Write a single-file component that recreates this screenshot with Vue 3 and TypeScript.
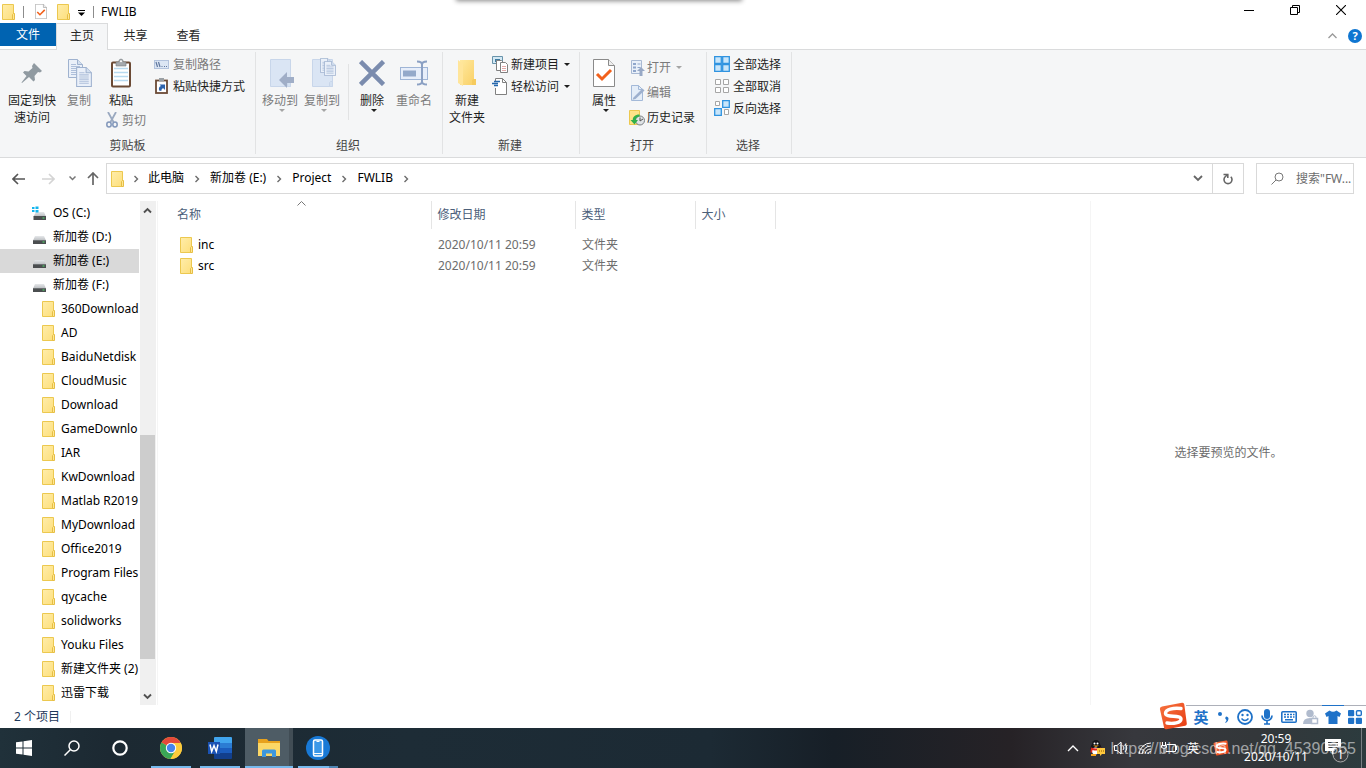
<script setup lang="ts">
interface Entry { name: string; icon: 'os' | 'drive' | 'folder'; selected?: boolean }
interface FileRow { name: string; modified: string; kind: string }

const tree: Entry[] = [
  { name: 'OS (C:)', icon: 'os' },
  { name: '新加卷 (D:)', icon: 'drive' },
  { name: '新加卷 (E:)', icon: 'drive', selected: true },
  { name: '新加卷 (F:)', icon: 'drive' },
  ...['360Download', 'AD', 'BaiduNetdisk', 'CloudMusic', 'Download', 'GameDownlo', 'IAR', 'KwDownload',
    'Matlab R2019', 'MyDownload', 'Office2019', 'Program Files', 'qycache', 'solidworks', 'Youku Files',
    '新建文件夹 (2)', '迅雷下载'].map((name): Entry => ({ name, icon: 'folder' })),
]
const crumbs: string[] = ['此电脑', '新加卷 (E:)', 'Project', 'FWLIB']
const files: FileRow[] = [
  { name: 'inc', modified: '2020/10/11 20:59', kind: '文件夹' },
  { name: 'src', modified: '2020/10/11 20:59', kind: '文件夹' },
]
</script>

<template>
  <div class="desktop">
    <svg class="defs" aria-hidden="true">
      <defs>
        <linearGradient id="gFolder" x1="0" y1="0" x2="1" y2="1"><stop offset="0" stop-color="#ffedaa" /><stop offset="1" stop-color="#fddf7c" /></linearGradient>
        <linearGradient id="gDrive" x1="0" y1="0" x2="0" y2="1"><stop offset="0" stop-color="#e6e8ea" /><stop offset="1" stop-color="#b9bcc0" /></linearGradient>
        <linearGradient id="gBig" x1="0" y1="0" x2="1" y2="1"><stop offset="0" stop-color="#ffe9a0" /><stop offset="1" stop-color="#f9cf63" /></linearGradient>
        <linearGradient id="gSogou" x1="0" y1="0" x2="1" y2="1"><stop offset="0" stop-color="#f7743f" /><stop offset="1" stop-color="#e63b12" /></linearGradient>
      </defs>
      <symbol id="folder" viewBox="0 0 14 16">
        <path d="M.5.500h11v15H.5z" fill="url(#gFolder)" stroke="#ecc84f" />
        <path d="M10.500 15.500v-5l1-1h1v6z" fill="#ffe793" stroke="#e6be45" />
      </symbol>
      <symbol id="drive" viewBox="0 0 15 14">
        <path d="M3 6h9l2 4.500H1z" fill="url(#gDrive)" />
        <path d="M1 10h13v4H1z" fill="#4b4e50" /><path d="M1 10h13v1H1z" fill="#6c7072" />
        <path d="M10.500 11.500h2v1h-2z" fill="#4fe36a" />
      </symbol>
      <symbol id="os" viewBox="0 0 15 14">
        <path d="M4 6h8l2 4.500H1.500z" fill="url(#gDrive)" />
        <path d="M1.500 10H14v4H1.500z" fill="#4b4e50" /><path d="M10.500 11.500h2v1h-2z" fill="#4fe36a" />
        <path d="M0 1h2.500v2H0zM3.500.5h3V3h-3zM0 4h2.500v2H0zM3.500 4h3v2.500h-3z" fill="#12b5ee" />
      </symbol>
      <symbol id="check" viewBox="0 0 22 28">
        <path d="M.5.5h15l6 6v21H.5z" fill="#fff" stroke="#8a8a8a" /><path d="M15.500.5v6h6" fill="#eee" stroke="#8a8a8a" />
        <path d="M4 15l5 5 9-9" fill="none" stroke="#f2611c" stroke-width="3" />
      </symbol>
      <symbol id="page" viewBox="0 0 15 19">
        <path d="M.5.5h9l5 5v13H.5z" fill="#eaf0f9" stroke="#9fb2cf" /><path d="M9.500.5v5h5" fill="#d4e0f0" stroke="#9fb2cf" />
        <path d="M3 5.500h5M3 7.500h9M3 9.500h9M3 11.500h9M3 13.500h9M3 15.500h9" stroke="#aebfda" fill="none" />
      </symbol>
      <symbol id="caret" viewBox="0 0 6 3"><path d="M0 0h6L3 3z" fill="currentColor" /></symbol>
      <symbol id="chev" viewBox="0 0 6 8"><path d="M1.500 1L4.500 4l-3 3" fill="none" stroke="#6b6b6b" stroke-width="1.400" /></symbol>
      <symbol id="sogou" viewBox="0 0 28 28">
        <path d="M3 4.500L23 .8q2-.3 2.300 1.600l2.500 19q.2 2-1.600 2.300L7.500 27.300q-2 .3-2.400-1.600L.9 7q-.4-2 2.100-2.500z" fill="url(#gSogou)" />
        <path d="M22 6.500C14 5.500 6.500 7.500 6.500 11.200c0 5 15.500 1 15.500 5.800 0 4-8 5-14 4" fill="none" stroke="#fff" stroke-width="3.400" stroke-linecap="round" />
      </symbol>
    </svg>

    <div class="notch"></div>

    <header class="titlebar">
      <svg class="i-folder" aria-hidden="true"><use href="#folder" /></svg>
      <span class="bar"></span>
      <button class="qa" aria-label="属性"><svg width="12" height="15"><use href="#check" /></svg></button>
      <button class="qa" aria-label="新建文件夹"><svg class="i-folder"><use href="#folder" /></svg></button>
      <button class="qa more" aria-label="自定义快速访问工具栏"><svg width="7" height="6" viewBox="0 0 7 6"><path d="M0 .5h7" stroke="#000" /><path d="M0 2.500h7L3.500 6z" /></svg></button>
      <span class="bar last"></span>
      <h1>FWLIB</h1>
      <div class="winbtns">
        <button aria-label="最小化"><svg width="10" height="10" viewBox="0 0 10 10"><path d="M0 5.500h10" stroke="#000" /></svg></button>
        <button aria-label="还原"><svg width="10" height="10" viewBox="0 0 10 10" fill="none" stroke="#000"><path d="M.5 2.500h7v7h-7zM2.500 2.500v-2h7v7h-2" /></svg></button>
        <button aria-label="关闭"><svg width="10" height="10" viewBox="0 0 10 10"><path d="M0 0l10 10M10 0L0 10" stroke="#000" stroke-width="1.100" /></svg></button>
      </div>
    </header>

    <nav class="tabs" aria-label="功能区">
      <button class="file">文件</button><button class="active">主页</button><button>共享</button><button>查看</button>
      <span class="fill"></span>
      <button class="fold" aria-label="折叠功能区"><svg width="9" height="6" viewBox="0 0 9 6"><path d="M.5 5l4-4 4 4" fill="none" stroke="#999" stroke-width="1.300" /></svg></button>
      <button class="help" aria-label="帮助">?</button>
    </nav>

    <section class="ribbon">
      <div class="group clip">
        <div class="body">
          <button class="big pin"><span class="ico"><svg width="22" height="22" viewBox="0 0 22 22"><path d="M13 1l8 8-2 1.500-2-.5-3.500 4 .5 4-1.500 1.500-4.500-4.500L1 21l-.5-.5L5.500 14 2 10.500 3.500 9l4 .5 4-3.500-.5-2z" fill="#909aa1" /></svg></span><span>固定到快</span><span>速访问</span></button>
          <button class="big copy off"><span class="ico"><svg width="24" height="28" viewBox="0 0 24 28"><use href="#page" width="15" height="19" /><use href="#page" x="8" y="8" width="16" height="20" /></svg></span><span>复制</span></button>
          <div class="stack">
            <button class="big paste"><span class="ico"><svg width="22" height="30" viewBox="0 0 22 30"><rect x="2" y="4.500" width="18" height="24" rx="1" fill="#fff" stroke="#6b4a35" stroke-width="2" /><path d="M4 10.500h14M4 14.500h14M4 18.500h14M4 22.500h14" stroke="#b8daf0" stroke-width="1.500" /><path d="M6 4h2.500Q9 1 11 1t2.500 3H16v4H6z" fill="#a4a9ad" stroke="#777d82" stroke-width=".6" /><circle cx="11" cy="3.300" r="1" fill="#fff" /></svg></span><span>粘贴</span></button>
            <button class="small off cut"><svg width="12" height="16" viewBox="0 0 12 16" fill="none"><path d="M2 0l5.500 10M10 0L4.500 10" stroke="#9aa9c0" stroke-width="1.800" /><ellipse cx="3" cy="12.500" rx="2.200" ry="2.500" stroke="#8398bb" stroke-width="1.500" /><ellipse cx="9" cy="12.500" rx="2.200" ry="2.500" stroke="#8398bb" stroke-width="1.500" /></svg>剪切</button>
          </div>
          <div class="col">
            <button class="small off"><svg width="15" height="9" viewBox="0 0 15 9"><rect x=".5" y=".5" width="14" height="8" fill="#dce6f4" stroke="#b3c3dd" /><path d="M2 2l1.500 5M4.500 2L6 7" stroke="#61789f" stroke-width="1.200" /><path d="M7.500 6.500h1M10 6.500h1M12 6.500h1" stroke="#61789f" /></svg>复制路径</button>
            <button class="small"><svg width="15" height="16" viewBox="0 0 15 16"><rect x="2" y="2.500" width="11" height="12.500" fill="#fff" stroke="#6b4a35" stroke-width="1.800" /><path d="M5 0h5v3.500H5z" fill="#9aa0a5" /><path d="M5 12.500c-.5-3 .5-4 2-4.500L5.500 6.500H11V12L9.300 10.300C8 10.500 7.500 11.500 7.300 13z" fill="#2c63ad" /></svg>粘贴快捷方式</button>
          </div>
        </div>
        <div class="caption">剪贴板</div>
      </div>

      <div class="group org">
        <div class="body">
          <button class="big off"><span class="ico"><svg width="28" height="30" viewBox="0 0 28 30"><path d="M4.500 1.500h20v27h-20z" fill="#dae5f4" stroke="#c8d6ea" /><path d="M21.500 28.500v-4l1-1h2v5z" fill="#d3e0f1" stroke="#c8d6ea" /><path d="M13 22l8-8v5h7v6h-7v5z" fill="#a0aec7" /></svg></span><span>移动到</span><svg class="dd"><use href="#caret" /></svg></button>
          <button class="big off"><span class="ico"><svg width="28" height="30" viewBox="0 0 28 30"><path d="M4.500 1.500h20v27h-20z" fill="#dae5f4" stroke="#c8d6ea" /><path d="M21.500 28.500v-4l1-1h2v5z" fill="#d3e0f1" stroke="#c8d6ea" /><use href="#page" x="12" y="0" width="12" height="15" /><use href="#page" x="16" y="3" width="12" height="15" /></svg></span><span>复制到</span><svg class="dd"><use href="#caret" /></svg></button>
          <span class="vsep"></span>
          <button class="big del"><span class="ico"><svg width="26" height="26" viewBox="0 0 26 26"><path d="M1.500 1.500l23 23M24.500 1.500l-23 23" stroke="#7b8cae" stroke-width="4.500" /></svg></span><span>删除</span><svg class="dd"><use href="#caret" /></svg></button>
          <button class="big off ren"><span class="ico"><svg width="28" height="26" viewBox="0 0 28 26" fill="none"><rect x=".5" y="7.500" width="27" height="12" fill="#e7eefa" stroke="#9fb5d6" /><path d="M3 10.500h13v6H3z" fill="#94a9ca" /><path d="M17 1.500q5 0 5 3 0-3 5-3M22 4v18M17 24.500q5 0 5-3 0 3 5 3" stroke="#8ba0c3" stroke-width="2" /></svg></span><span>重命名</span></button>
        </div>
        <div class="caption">组织</div>
      </div>

      <div class="group new">
        <div class="body">
          <button class="big"><span class="ico"><svg width="20" height="28" viewBox="0 0 20 28"><path d="M3 1h14v20h2v5H3z" fill="url(#gBig)" /><path d="M1 1l5 4v22l-5-3z" fill="#ffe59a" /><path d="M15 26v-5l1.500-1H19v6z" fill="#f6cb5e" /></svg></span><span>新建</span><span>文件夹</span></button>
          <div class="col">
            <button class="small"><svg width="17" height="17" viewBox="0 0 17 17"><path d="M.5.500h10v7H.5z" fill="#d3e8f4" stroke="#6893aa" /><path d="M3 3h5v3H3z" fill="#3e7ba0" /><path d="M4.500 4.500h5l2 2v8h-7z" fill="#fff" stroke="#808080" /><path d="M8.500 6.500h5l2 2v8h-7z" fill="#fff" stroke="#808080" /><path d="M10 10.500h4M10 12.500h4M10 14.500h4" stroke="#e2a9a9" /></svg>新建项目<svg class="dd"><use href="#caret" /></svg></button>
            <button class="small"><svg width="17" height="17" viewBox="0 0 17 17"><path d="M3.500 3V.5h7l4 4v12h-11V10" fill="#fff" stroke="#808080" /><path d="M10.500.5v4h4" fill="none" stroke="#808080" /><path d="M2 3.500h6M0 5.500h6M2 7.500h4" stroke="#2567ac" stroke-width="1.300" /></svg>轻松访问<svg class="dd"><use href="#caret" /></svg></button>
          </div>
        </div>
        <div class="caption">新建</div>
      </div>

      <div class="group open">
        <div class="body">
          <button class="big"><span class="ico"><svg width="22" height="28"><use href="#check" /></svg></span><span>属性</span><svg class="dd"><use href="#caret" /></svg></button>
          <div class="col tall">
            <button class="small off"><svg width="16" height="16" viewBox="0 0 16 16"><path d="M2.500.5h10v13h-10z" fill="#e9f0f9" stroke="#a8b9d3" /><path d="M4 3h3v2H4zM4 6.500h3v2H4zM4 10h3v2H4z" fill="#8fa6cb" /><path d="M8.500 4h3M8.500 7.500h3" stroke="#8fa6cb" /><path d="M12 7l4 4h-2.500v5h-3v-5H8z" fill="#97a8c5" /></svg>打开<svg class="dd"><use href="#caret" /></svg></button>
            <button class="small off"><svg width="16" height="16" viewBox="0 0 16 16"><path d="M2.500.5h7l4 4v11h-11z" fill="#e4edf8" stroke="#a3b9d8" /><path d="M9.500.5v4h4" fill="none" stroke="#a3b9d8" /><path d="M4.500 12.500l9-9 2 2-9 8.500-3 .8z" fill="#9db0ce" /></svg>编辑</button>
            <button class="small"><svg width="16" height="16" viewBox="0 0 16 16"><path d="M.5.500h10v14H.5z" fill="#ffe388" stroke="#ecc84f" /><circle cx="11" cy="10.500" r="4.500" fill="#dfe3e6" stroke="#7b8084" /><path d="M11 7.500v3.500l3-2" fill="none" stroke="#555" /><path d="M10.500 4.500C6 4.500 3.500 7 3.800 10H1.500l4 4.500L9 10H6.800C6.800 8 8 7 10.500 6.500z" fill="#32b04a" /></svg>历史记录</button>
          </div>
        </div>
        <div class="caption">打开</div>
      </div>

      <div class="group sel">
        <div class="body">
          <div class="col">
            <button class="small"><svg width="16" height="16" viewBox="0 0 16 16" fill="#c8e5fa" stroke="#2f93e0" stroke-width="1.300"><path d="M.7.700h6.600v6.600H.7zM8.700.700h6.600v6.600H8.700zM.7 8.700h6.600v6.600H.7zM8.700 8.700h6.600v6.600H8.700z" /></svg>全部选择</button>
            <button class="small"><svg width="16" height="16" viewBox="0 0 16 16" fill="#fff" stroke="#a6a6a6"><path d="M1.500 1.500h5v5h-5zM9.500 1.500h5v5h-5zM1.500 9.500h5v5h-5zM9.500 9.500h5v5h-5z" /></svg>全部取消</button>
            <button class="small"><svg width="16" height="16" viewBox="0 0 16 16"><path d="M1.500 1.500h4v4h-4zM10.500 9.500h4v5h-4z" fill="#fff" stroke="#a6a6a6" /><path d="M8.700.700h6.600v6.600H8.700zM.7 8.700h6.600v6.600H.7z" fill="#c8e5fa" stroke="#2f93e0" stroke-width="1.300" /></svg>反向选择</button>
          </div>
        </div>
        <div class="caption">选择</div>
      </div>
    </section>

    <div class="address">
      <button class="nav back" aria-label="后退"><svg width="13" height="12" viewBox="0 0 13 12" fill="none" stroke="#555" stroke-width="1.600"><path d="M13 6H1M6 1L1 6l5 5" /></svg></button>
      <button class="nav fwd" aria-label="前进"><svg width="13" height="12" viewBox="0 0 13 12" fill="none" stroke="#d4d4d4" stroke-width="1.600"><path d="M0 6h12M7 1l5 5-5 5" /></svg></button>
      <button class="nav rec" aria-label="最近位置"><svg width="7" height="5" viewBox="0 0 7 5"><path d="M.5.500l3 3 3-3" fill="none" stroke="#777" stroke-width="1.500" /></svg></button>
      <button class="nav up" aria-label="上移"><svg width="12" height="13" viewBox="0 0 12 13" fill="none" stroke="#666" stroke-width="1.700"><path d="M6 13V1M1 6l5-5 5 5" /></svg></button>
      <div class="path">
        <svg class="i-folder" aria-hidden="true"><use href="#folder" /></svg>
        <svg class="chev first" aria-hidden="true"><use href="#chev" /></svg>
        <template v-for="c in crumbs" :key="c">
          <button class="crumb">{{ c }}</button><svg class="chev" aria-hidden="true"><use href="#chev" /></svg>
        </template>
        <span class="fill"></span>
        <button class="hist" aria-label="以前的位置"><svg width="10" height="7" viewBox="0 0 10 7"><path d="M1 1l4 4 4-4" fill="none" stroke="#666" stroke-width="1.800" /></svg></button>
        <button class="refresh" aria-label="刷新"><svg width="12" height="12" viewBox="0 0 12 12" fill="none" stroke="#666" stroke-width="1.600"><path d="M8.800 3.800A4 4 0 1 1 3.200 3.800L5 2" /><path d="M1.500 1.500h4.300V5" /></svg></button>
      </div>
      <div class="search">
        <svg width="13" height="13" viewBox="0 0 13 13" fill="none" stroke="#777" aria-hidden="true"><circle cx="8" cy="5" r="4" /><path d="M5 8L.5 12.500" /></svg>
        <input type="text" aria-label="搜索" placeholder="搜索&quot;FW..." />
      </div>
    </div>

    <main class="content">
      <nav class="side" aria-label="导航窗格">
        <ul>
          <li v-for="e in tree" :key="e.name" :class="[e.icon, { selected: e.selected }]">
            <svg :class="e.icon === 'folder' ? 'i-folder' : 'i-drive'" aria-hidden="true"><use :href="'#' + e.icon" /></svg>
            <span>{{ e.name }}</span>
          </li>
        </ul>
        <div class="scroll">
          <button aria-label="向上滚动"><svg width="9" height="7" viewBox="0 0 9 7"><path d="M1 5.500L4.500 2 8 5.500" fill="none" stroke="#505050" stroke-width="1.900" /></svg></button>
          <div class="track"><div class="thumb"></div></div>
          <button aria-label="向下滚动"><svg width="9" height="7" viewBox="0 0 9 7"><path d="M1 1.500L4.500 5 8 1.500" fill="none" stroke="#505050" stroke-width="1.900" /></svg></button>
        </div>
      </nav>
      <section class="list">
        <table>
          <thead>
            <tr>
              <th class="name">名称<svg class="sort" viewBox="0 0 9 5"><path d="M.5 4.500l4-4 4 4" fill="none" stroke="#777" /></svg></th>
              <th class="date">修改日期</th><th class="type">类型</th><th class="size">大小</th>
            </tr>
          </thead>
          <tbody>
            <tr v-for="f in files" :key="f.name">
              <td class="fname"><svg class="i-folder" aria-hidden="true"><use href="#folder" /></svg>{{ f.name }}</td>
              <td>{{ f.modified }}</td><td>{{ f.kind }}</td><td></td>
            </tr>
          </tbody>
        </table>
      </section>
      <aside class="preview">选择要预览的文件。</aside>
    </main>

    <footer class="status"><span>2 个项目</span></footer>

    <div class="taskbar">
      <button aria-label="开始"><svg width="16" height="16" viewBox="0 0 16 16" fill="#fff"><path d="M0 2.300L6.500 1.400v6.100H0zM7.500 1.200L16 0v7.500H7.500zM0 8.500h6.500v6.100L0 13.700zM7.500 8.500H16V16l-8.500-1.200z" /></svg></button>
      <button aria-label="搜索"><svg width="16" height="16" viewBox="0 0 16 16" fill="none" stroke="#fff" stroke-width="1.500"><circle cx="10" cy="6" r="5" /><path d="M6.500 9.500L.5 15.500" /></svg></button>
      <button aria-label="Cortana"><svg width="16" height="16" viewBox="0 0 16 16"><circle cx="8" cy="8" r="6.700" fill="none" stroke="#fff" stroke-width="2.200" /></svg></button>
      <button class="app chrome" aria-label="Chrome"><svg width="22" height="22" viewBox="0 0 22 22"><circle cx="11" cy="11" r="11" fill="#fccb3d" /><path d="M11 11L1.500 5.500a11 11 0 0 1 19 0z" fill="#e5493a" /><path d="M1.500 5.500A11 11 0 0 0 10.500 22l5-8.500L11 11z" fill="#3aa757" /><path d="M11 6h9.800A11 11 0 0 1 10.500 22l5-8.500z" fill="#fccb3d" /><circle cx="11" cy="11" r="5.200" fill="#fff" /><circle cx="11" cy="11" r="4.200" fill="#4684ee" /></svg></button>
      <button class="app" aria-label="Word"><svg width="24" height="22" viewBox="0 0 24 22"><path d="M6 1q0-1 1-1h16q1 0 1 1v5H6z" fill="#41a5ee" /><path d="M6 6h18v5H6z" fill="#2b7cd3" /><path d="M6 11h18v5H6z" fill="#1b5dbe" /><path d="M6 16h18v5q0 1-1 1H7q-1 0-1-1z" fill="#123f8c" /><path d="M0 5h12v12H0z" fill="#1a52b4" /><path d="M2 7.500l1.700 7L6 8.500l2.300 6 1.700-7" fill="none" stroke="#fff" stroke-width="1.500" /></svg></button>
      <button class="app current" aria-label="文件资源管理器"><svg width="22" height="18" viewBox="0 0 22 18"><path d="M0 0h9l1.500 2H22v4H0z" fill="#e7a11c" /><path d="M0 4h22v13H0z" fill="#fbd766" /><path d="M4 18v-6q0-1.500 1.500-1.500h11Q18 10.500 18 12v6h-4v-3.500H8V18z" fill="#3d97dd" /></svg></button>
      <button class="app phone" aria-label="手机助手"><svg width="24" height="24" viewBox="0 0 24 24"><circle cx="12" cy="12" r="12" fill="#1879d6" /><rect x="7.500" y="4" width="9" height="16" rx="1.500" fill="#3c98e8" stroke="#fff" stroke-width="1.500" /><path d="M8 17.500h8" stroke="#fff" /><path d="M10.500 5.500h3" stroke="#fff" /></svg></button>
      <span class="fill"></span>
      <div class="tray">
        <button aria-label="显示隐藏的图标"><svg width="12" height="8" viewBox="0 0 12 8"><path d="M1 7l5-5 5 5" fill="none" stroke="#fff" stroke-width="1.400" /></svg></button>
        <button aria-label="QQ"><svg width="16" height="16" viewBox="0 0 16 16"><ellipse cx="7" cy="8.500" rx="5.500" ry="6.500" fill="#15151a" /><ellipse cx="7" cy="4.500" rx="4" ry="4.500" fill="#15151a" /><ellipse cx="6.500" cy="11" rx="3.500" ry="3.500" fill="#fff" /><circle cx="5.500" cy="3.500" r="1" fill="#fff" /><circle cx="8.500" cy="3.500" r="1" fill="#fff" /><path d="M4 5.500h6L7 7z" fill="#f5a21b" /><path d="M2 7.500q5 2 10 0l.5 1.500q-4 2.500-9 1L3 12.500H1.500z" fill="#e2231a" /><path d="M2 14h5v2H2z" fill="#f5a21b" /><path d="M8 8h8v6h-3l-2 2v-2H8z" fill="#ffc83d" /><path d="M10 11h1M12 11h1M14 11h1" stroke="#8a5a00" /></svg></button>
        <button aria-label="音量"><svg width="16" height="16" viewBox="0 0 16 16" fill="none" stroke="#fff"><path d="M1.500 5.500h2.500l4-3.500v12l-4-3.500H1.500zM10 6q2 2 0 4M12 4q3.500 4 0 8" /></svg></button>
        <button aria-label="网络"><svg width="16" height="16" viewBox="0 0 16 16" fill="none" stroke="#fff"><path d="M2 14A12 12 0 0 1 14 3M5 14a9 9 0 0 1 9-8M8 14a6 6 0 0 1 6-5M11 14a3 3 0 0 1 3-2.500" /></svg></button>
        <button aria-label="电池"><svg width="16" height="16" viewBox="0 0 16 16" fill="none" stroke="#fff"><path d="M5.500 4.500h9v7H5M15.500 6v4M1.500 2v3M4.500 2v3M.5 5.500h5v2q-2.500 2-5 0zM3 9v4" /></svg></button>
        <button class="lang">英</button>
        <button class="sg" aria-label="搜狗输入法"><svg width="16" height="16"><use href="#sogou" /></svg></button>
      </div>
      <div class="clock"><span>20:59</span><span>2020/10/11</span></div>
      <button class="notes" aria-label="通知"><svg width="26" height="26" viewBox="0 0 26 26"><path d="M2 2h16v12h-5l-4 4v-4H2z" fill="#fff" /><path d="M5 5.500h10M5 8h10M5 10.500h10" stroke="#3b3d41" /><circle cx="17.500" cy="17.500" r="7.500" fill="#3b3f42" stroke="#aaa" /><text x="17.500" y="22" text-anchor="middle">1</text></svg></button>
      <span class="peek"></span>
    </div>

    <div class="ime">
      <svg class="logo" aria-hidden="true"><use href="#sogou" /></svg>
      <button class="zh">英</button>
      <button aria-label="标点"><svg width="16" height="16" viewBox="0 0 16 16"><circle cx="5" cy="5" r="2" /><path d="M10.500 8a1.900 1.900 0 0 1 3 1.700q0 2.800-2.700 4.300l-.6-.8q1.300-.9 1.300-2.200-1.900-1-1-3z" /></svg></button>
      <button aria-label="表情"><svg width="16" height="16" viewBox="0 0 16 16"><circle cx="8" cy="8" r="7" fill="none" stroke="#1f72c8" stroke-width="1.800" /><circle cx="5.500" cy="6" r="1.200" /><circle cx="10.500" cy="6" r="1.200" /><path d="M4.500 9.500q3.500 4 7 0" fill="none" stroke="#1f72c8" stroke-width="1.500" /></svg></button>
      <button aria-label="语音"><svg width="12" height="16" viewBox="0 0 12 16"><rect x="3" y="0" width="6" height="10" rx="3" /><path d="M1 6.500a5 5 0 0 0 10 0M6 12v3M3 15h6" fill="none" stroke="#1f72c8" stroke-width="1.700" /></svg></button>
      <button aria-label="键盘"><svg width="16" height="12" viewBox="0 0 16 12"><rect x=".8" y=".8" width="14.400" height="10.400" rx="1" fill="none" stroke="#1f72c8" stroke-width="1.600" /><path d="M3 3.500h2M6 3.500h2M9 3.500h2M12 3.500h1.500M3 6h2M6 6h2M9 6h2M12 6h1.500M4 8.700h8" stroke="#1f72c8" stroke-width="1.400" /></svg></button>
      <button aria-label="账户"><svg width="16" height="16" viewBox="0 0 16 16" fill="#b0bbcd"><circle cx="7" cy="4.500" r="3.700" /><path d="M0 15q0-6 7-6 1 0 1.500.3V15z" /><rect x="8.500" y="9.500" width="6" height="5" fill="#fff" stroke="#b0bbcd" stroke-width="1.500" /><path d="M10 9V7.500q1.500-1.500 3 0V9" fill="none" stroke="#b0bbcd" /></svg></button>
      <button class="skin" aria-label="皮肤"><svg width="16" height="14" viewBox="0 0 16 14"><path d="M4.500.5q3.500 2.500 7 0L16 3.500l-1.500 3.500-2-1V14h-9V6l-2 1L0 3.500z" /></svg></button>
      <button aria-label="工具箱"><svg width="14" height="14" viewBox="0 0 14 14"><rect width="6.200" height="6.200" rx="1" /><rect x="8.500" y=".7" width="4.800" height="4.800" rx="1" fill="none" stroke="#1f72c8" stroke-width="1.400" /><rect y="7.800" width="6.200" height="6.200" rx="1" /><rect x="7.800" y="7.800" width="6.200" height="6.200" rx="1" /></svg></button>
    </div>
    <div class="watermark">https://blog.csdn.net/qq_45390365</div>
  </div>
</template>

<style>
html, body { height: 100%; }
#app { height: 100%; }
</style>

<style scoped>
* { box-sizing: border-box; }
.desktop { position: relative; display: flex; flex-direction: column; min-height: 100%; height: 100vh; overflow: hidden; background: #fff; color: #000; font: 12px/17px "Noto Sans", "Noto Sans CJK SC", sans-serif; }
button { font: inherit; color: inherit; background: none; border: 0; padding: 0; display: flex; align-items: center; justify-content: center; white-space: nowrap; }
svg { flex: none; display: block; }
.defs { position: absolute; width: 0; height: 0; }
.fill { flex: 1; }
.i-folder { width: 14px; height: 16px; }
.i-drive { width: 15px; height: 14px; }
.notch { position: absolute; top: -10px; left: 50%; width: 284px; height: 10px; margin-left: -226px; background: #bbb; box-shadow: 0 0 5px 1px #888; }

.titlebar { display: flex; align-items: center; height: 23px; flex: none; padding-left: 2px; }
.titlebar .bar { width: 1px; height: 12px; background: #8c8c8c; margin: 0 11px 0 7px; }
.titlebar .qa { margin-right: 10px; }
.titlebar .more { margin: 2px 0 0 -3px; }
.titlebar .bar.last { margin: 0 7px 0 8px; }
h1 { margin: 0; font-size: 12px; font-weight: 400; }
.winbtns { display: flex; margin: 0 2px 3px auto; }
.winbtns button { width: 46px; height: 20px; }

.tabs { display: flex; height: 27px; flex: none; border-bottom: 1px solid #dadbdc; color: #262626; }
.tabs button { width: 53px; height: 24px; }
.tabs .file { width: 56px; height: 23px; background: #0063b1; color: #fff; }
.tabs .active { width: 52px; height: 27px; margin-right: 1px; padding-bottom: 4px; background: #f5f6f7; border: 1px solid #dadbdc; border-bottom: 0; }
.tabs .fold { width: 20px; height: 25px; }
.tabs .help { width: 14px; height: 14px; margin: 6px 4px 0 6px; border-radius: 50%; background: #0f76d1; color: #fff; font-size: 11px; line-height: 14px; font-weight: 700; }

.ribbon { display: flex; height: 108px; flex: none; background: #f5f6f7; border-bottom: 1px solid #dadbdc; color: #1e1e1e; }
.group { display: flex; flex-direction: column; margin: 2px 0 3px; border-right: 1px solid #e2e3e4; }
.clip { width: 256px; }
.org { width: 187px; padding-left: 3px; }
.new { width: 137px; padding-left: 3px; }
.open { width: 127px; padding-left: 3px; }
.sel { width: 85px; padding-left: 7px; }
.body { display: flex; flex: 1; }
.caption { height: 19px; line-height: 21px; text-align: center; color: #444; }
.sel .caption { margin-left: -9px; }
.org .caption, .new .caption, .open .caption { margin-left: -5px; }
.big { flex-direction: column; justify-content: flex-start; align-self: flex-start; width: 42px; }
.ico { height: 40px; padding-top: 2px; display: flex; align-items: center; }
.off { color: #7b7b7b; }
.dd { width: 6px; height: 3px; color: #1e1e1e; }
.big .dd { margin-left: 4px; }
.off .dd { color: #a5a5a5; }
.pin { width: 60px; margin-left: 2px; }
.copy { width: 34px; }
.copy .ico { padding-left: 2px; }
.stack { width: 50px; display: flex; flex-direction: column; }
.stack .big { align-self: stretch; width: 50px; }
.col { display: flex; flex-direction: column; align-items: flex-start; padding-top: 1px; }
.col.tall { padding-top: 3px; }
.small { height: 22px; gap: 4px; }
.tall .small { height: 25px; gap: 2px; }
.new .small { gap: 2px; }
.new .dd, .open .col .dd { margin-left: 3px; }
.new .big .dd { margin-left: 0; }
.cut { align-self: flex-start; margin-left: 10px; }
.clip .col { margin-left: 8px; }
.sel .small { gap: 3px; }
.vsep { width: 1px; height: 56px; margin: 12px 3px 0 5px; background: #e2e3e4; }
.del { width: 40px; }
.ren { width: 44px; }
.new .col { margin-left: 4px; }
.open .col { margin-left: 4px; }

.address { display: flex; align-items: center; height: 43px; flex: none; padding: 0 12px 2px; }
.nav { height: 30px; }
.fwd { margin-left: 17px; }
.rec { margin-left: 14px; }
.up { margin: 0 7px 0 11px; }
.path { flex: 1; display: flex; align-items: center; height: 31px; border: 1px solid #d9d9d9; padding-left: 4px; }
.chev { width: 6px; height: 8px; margin: 0 10px; }
.chev.first { margin: 0 9px 0 8px; }
.crumb { height: 26px; padding-bottom: 2px; }
.hist { width: 28px; height: 29px; }
.refresh { width: 31px; height: 29px; border-left: 1px solid #d9d9d9; }
.search { display: flex; align-items: center; width: 98px; height: 31px; margin-left: 12px; border: 1px solid #d9d9d9; padding-left: 14px; }
.search input { flex: 1; min-width: 0; width: 0; height: 26px; margin-left: 12px; padding: 0; border: 0; outline: 0; background: none; font: inherit; }
.search input::placeholder { color: #6d6d6d; opacity: 1; }

.content { flex: 1; min-height: 0; display: flex; }
.side { display: flex; width: 158px; flex: none; border-right: 1px solid #f5f5f5; }
.side ul { width: 140px; margin: 0; padding: 0 1px 0 0; list-style: none; overflow: hidden; }
.side li { display: flex; align-items: center; height: 24px; padding-left: 32px; gap: 6px; overflow: hidden; white-space: nowrap; }
.side li span { padding-bottom: 2px; }
.side li.folder { padding-left: 42px; gap: 5px; }
.side li.selected { background: #d9d9d9; }
.scroll { width: 16px; display: flex; flex-direction: column; background: #f0f0f0; }
.scroll button { height: 18px; padding-right: 1px; }
.track { flex: 1; display: flex; flex-direction: column; padding-top: 216px; }
.thumb { flex: 0 1 224px; width: 15px; background: #cdcdcd; }

.list { flex: 1; min-width: 0; }
table { border-collapse: collapse; table-layout: fixed; width: 617px; }
th { position: relative; height: 28px; padding: 0 0 2px 6px; text-align: left; font-weight: 400; color: #4c607a; border-right: 1px solid #e5e5e5; }
th.name { width: 273px; padding-left: 19px; }
th.date { width: 144px; }
th.type { width: 120px; }
th.size { width: 80px; }
.sort { position: absolute; top: 0; left: 139px; width: 9px; height: 5px; }
tbody::before { content: ""; display: block; height: 5px; }
td { height: 21px; padding: 0 0 0 7px; color: #6d6d6d; }
td.fname { display: flex; align-items: center; gap: 4px; padding-left: 22px; color: #000; }
.preview { width: 276px; flex: none; display: flex; align-items: center; justify-content: center; padding-bottom: 2px; border-left: 1px solid #f5f5f5; color: #6d6d6d; }

.status { height: 23px; flex: none; display: flex; align-items: center; padding-left: 14px; color: #1e395b; }
.status span { padding-right: 10px; border-right: 1px solid #f0f0f0; line-height: 12px; }

.taskbar { display: flex; height: 40px; flex: none; background: linear-gradient(90deg, #20313a, #1c2932 8%, #1d2c36 30%, #1c2a34 52%, #171f27 61%, #262226 74%, #37383d 83%, #33373a 92%, #2c3b3e); color: #fff; }
.taskbar > button { width: 48px; height: 40px; }
.app { position: relative; margin-right: 1px; }
.app::after { content: ""; position: absolute; left: 4px; right: 4px; bottom: 0; height: 2px; background: #76b9ed; }
.chrome { margin-left: 3px; }
.current { background: #4e5c65; box-shadow: inset -4px 0 #414d55; }
.current::after { left: 0; right: 0; }
.phone::after { right: 4px; background: linear-gradient(90deg, #76b9ed 78%, #4f86b4 78%); }
.tray { display: flex; align-items: center; }
.tray button { width: 24px; height: 40px; }
.tray .sg { width: 32px; }
.clock { display: flex; flex-direction: column; justify-content: center; align-items: center; width: 78px; line-height: 18px; }
.taskbar > .notes { width: 46px; padding: 4px 4px 0 0; }
.notes text { fill: #fff; font-size: 12px; }
.peek { width: 5px; border-left: 1px solid #777f83; }

.ime { position: absolute; right: 0; bottom: 40px; display: flex; height: 23px; width: 180px; padding-left: 4px; background: #fff; border-top: 1px solid #adb0b9; fill: #1f72c8; color: #1f72c8; }
.ime button { width: 22px; height: 22px; }
.ime .zh { font-size: 15px; font-weight: 700; }
.ime .skin { box-shadow: 0 -1px #1f72c8; }
.ime .logo { position: absolute; left: -27px; top: -4px; width: 28px; height: 28px; z-index: 1; }
.watermark { position: absolute; right: 10px; bottom: 7px; font: 16px/24px "Liberation Sans", sans-serif; color: #ffffff8c; pointer-events: none; }
</style>
